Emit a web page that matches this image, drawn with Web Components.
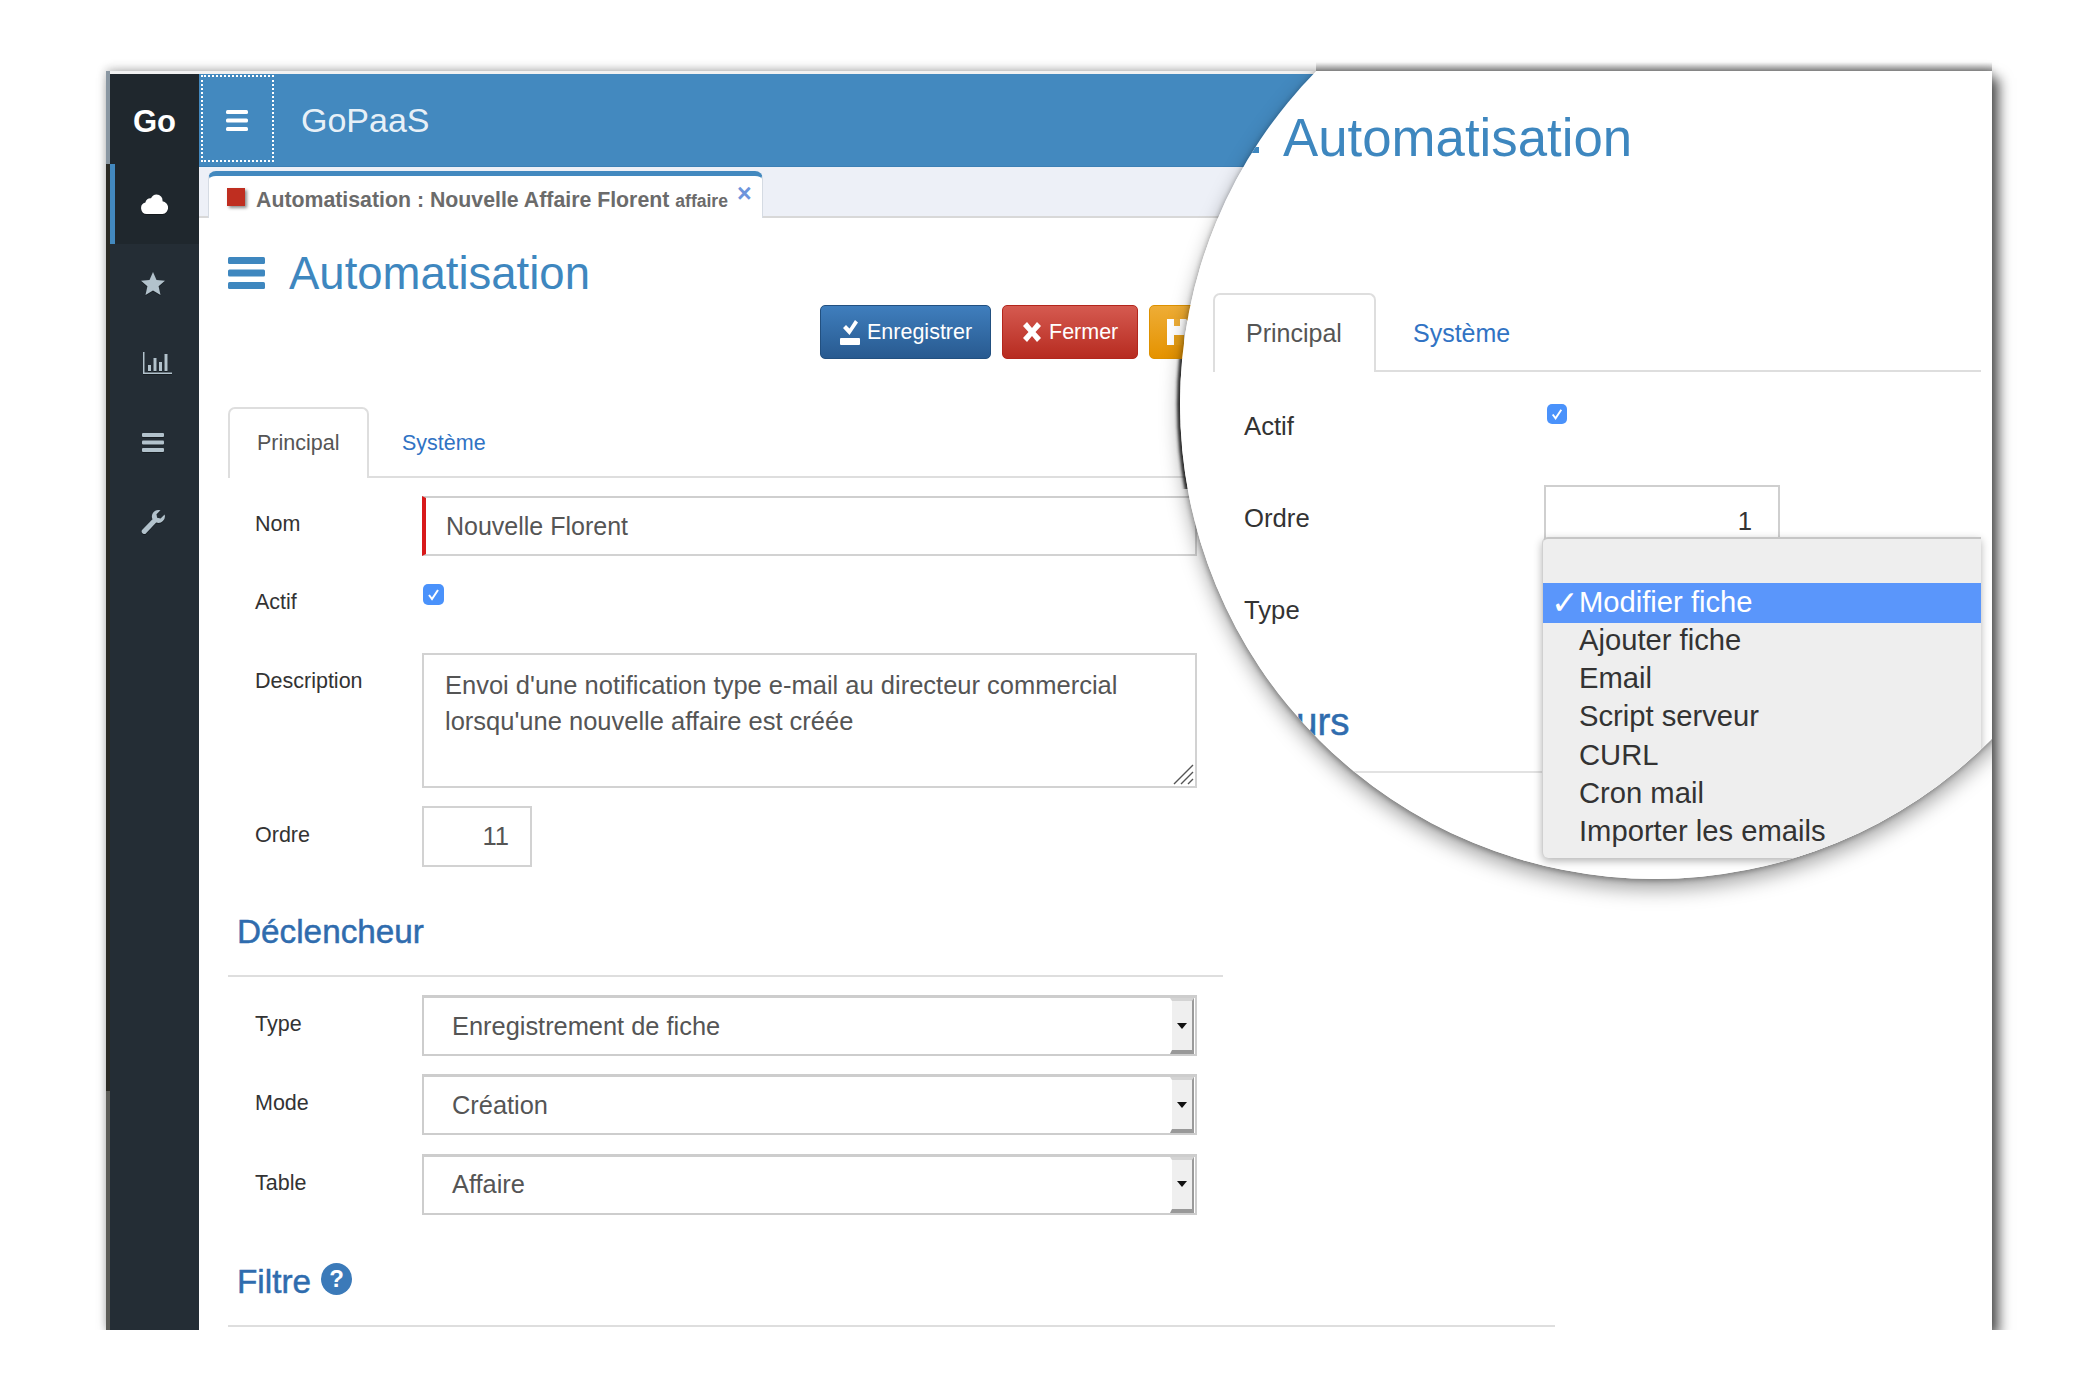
<!DOCTYPE html>
<html lang="fr">
<head>
<meta charset="utf-8">
<title>GoPaaS</title>
<style>
  html, body { margin: 0; background: #fff; }
  body { font-family: "Liberation Sans", Arial, sans-serif; font-size: 21.5px; color: #333; overflow: hidden; }
</style>
</head>
<body>
<gp-window>
  <gp-sidebar slot="side"></gp-sidebar>
  <gp-header slot="head" title-text="GoPaaS"></gp-header>
  <gp-doctab slot="head" tab-title="Automatisation : Nouvelle Affaire Florent" tab-sub="affaire"></gp-doctab>

  <gp-title text="Automatisation"></gp-title>
  <gp-toolbar></gp-toolbar>
  <gp-tabs style="margin-top:48px"></gp-tabs>

  <gp-field label="Nom" style="margin-top:18px"><gp-box required style="font-size:25px;padding-left:20px">Nouvelle Florent</gp-box></gp-field>
  <gp-field label="Actif" style="margin-top:18px;height:60px"><gp-check style="margin-top:10px;margin-left:1px"></gp-check></gp-field>
  <gp-field label="Description" style="margin-top:19px"><gp-box area>Envoi d'une notification type e-mail au directeur commercial<br>lorsqu'une nouvelle affaire est créée</gp-box></gp-field>
  <gp-field label="Ordre" style="margin-top:18px;--label-top:14px"><gp-box number style="height:61px">11</gp-box></gp-field>

  <gp-section style="margin-top:45px;width:995px">Déclencheur</gp-section>
  <gp-field label="Type" style="margin-top:18px;--label-top:14px"><gp-select>Enregistrement de fiche</gp-select></gp-field>
  <gp-field label="Mode" style="margin-top:18px;--label-top:14px"><gp-select>Création</gp-select></gp-field>
  <gp-field label="Table" style="margin-top:18.500px;--label-top:14px"><gp-select>Affaire</gp-select></gp-field>
  <gp-section help style="margin-top:47px;width:1327px">Filtre</gp-section>

  <gp-lens slot="over"></gp-lens>
</gp-window>

<script>
const bars = (w, h, t) => `<svg width="${w}" height="${h}" viewBox="0 0 ${w} ${h}" fill="currentColor" aria-hidden="true">
  <rect width="${w}" height="${t}" rx="1.5"/><rect y="${(h - t) / 2}" width="${w}" height="${t}" rx="1.5"/><rect y="${h - t}" width="${w}" height="${t}" rx="1.5"/></svg>`;

class GpWindow extends HTMLElement {
  constructor() {
    super();
    this.attachShadow({ mode: "open" }).innerHTML = `
    <style>
      :host { display: block; position: relative; box-sizing: border-box; width: 1886px; height: 1259px; margin: 71px 0 0 106px;
        background: #fff; box-shadow: 0 -2px 9px rgba(0,0,0,.22), 7px 7px 12px rgba(0,0,0,.65); }
      .frame { display: flex; height: 100%; }
      .edge { width: 4px; flex: none; background: linear-gradient(#8a97a2 0 93px, #2b2a24 93px 1020px, #5d5d58 1020px); }
      .right { flex: 1; display: flex; flex-direction: column; min-width: 0; }
      .topline { height: 3px; flex: none; background: #f1f1f1; }
      .body { flex: 1; display: flex; min-height: 0; }
      .col { flex: 1; display: flex; flex-direction: column; min-width: 0; overflow: hidden; }
      .content { padding: 27px 0 0 29px; flex: 1; overflow: hidden; }
      .lensTop { position: absolute; left: 1210px; right: 0; top: -9px; height: 9px; background: linear-gradient(rgba(0,0,0,0), rgba(0,0,0,.36)); }
    </style>
    <div class="frame">
      <div class="edge"></div>
      <div class="right">
        <div class="topline"></div>
        <div class="body">
          <slot name="side"></slot>
          <div class="col">
            <slot name="head"></slot>
            <div class="content"><slot></slot></div>
          </div>
        </div>
      </div>
    </div>
    <div class="lensTop"></div>
    <slot name="over"></slot>`;
  }
}

class GpSidebar extends HTMLElement {
  constructor() {
    super();
    this.attachShadow({ mode: "open" }).innerHTML = `
    <style>
      :host { display: block; width: 89px; flex: none; background: #242d35; color: #b2c2cc; }
      .logo { height: 90px; display: flex; align-items: center; justify-content: center; background: #1f272d; color: #fff; font-weight: 700; font-size: 31px; padding: 5px 0 0 0; box-sizing: border-box; }
      .item { height: 79.5px; display: flex; align-items: center; justify-content: center; box-sizing: border-box; padding-right: 3px; }
      .item.on { background: #1f272d; color: #fff; border-left: 5px solid #4389bf; padding-right: 5px; height: 80px; }
      svg { display: block; filter: drop-shadow(0 1px 0 rgba(0,0,0,.35)); }
    </style>
    <div class="logo">Go</div>
    <div class="item on"><svg width="27" height="20" viewBox="0 0 27 20" fill="currentColor"><path d="M6 20a5.8 5.8 0 0 1-1.6-11.4A5 5 0 0 1 10 4.2 6.6 6.6 0 0 1 15.500 0.500a6 6 0 0 1 6 6.800A6.400 6.400 0 0 1 21.500 20z"/></svg></div>
    <div class="item"><svg width="24" height="23" viewBox="0 0 24 23" fill="currentColor"><polygon points="12,0 15.500,8 24,8.700 17.600,14.300 19.500,23 12,18.400 4.500,23 6.400,14.300 0,8.700 8.500,8"/></svg></div>
    <div class="item"><svg width="29" height="22" viewBox="0 0 29 22" fill="currentColor" style="margin-left:8px"><path d="M0 0h1.500v20.500H29V22H0z"/><rect x="5" y="13" width="3" height="6"/><rect x="10.500" y="6" width="3" height="13"/><rect x="16" y="10" width="3" height="9"/><rect x="21.500" y="2" width="3" height="17"/></svg></div>
    <div class="item"><svg width="22" height="19" viewBox="0 0 22 19" fill="currentColor"><rect width="22" height="4" rx="1"/><rect y="7.500" width="22" height="4" rx="1"/><rect y="15" width="22" height="4" rx="1"/></svg></div>
    <div class="item"><svg width="24" height="24" viewBox="0 0 24 24" fill="currentColor"><path d="M17.500 0a6.500 6.500 0 0 1 2 .3L15.500 4.300l.6 3.500 3.500.6 4-4A6.500 6.500 0 0 1 15.200 12.500L5.300 23a2.500 2.500 0 0 1-4-3.200L11.500 9.300A6.500 6.500 0 0 1 17.500 0z"/></svg></div>`;
  }
}

class GpHeader extends HTMLElement {
  constructor() {
    super();
    this.attachShadow({ mode: "open" }).innerHTML = `
    <style>
      :host { display: flex; align-items: center; height: 93px; flex: none; background: #4389bf; color: #fff; box-sizing: border-box; border-bottom: 1px solid #3d80b5; }
      .toggle { width: 73px; height: 87px; margin: 0 0 3px 2px; box-sizing: border-box; border: 2px dotted #fff; display: flex; align-items: center; justify-content: center; padding: 3px 1px 0 0; }
      .name { margin-left: 27px; font-size: 34px; color: rgba(255,255,255,.9); }
    </style>
    <div class="toggle">${bars(22, 21, 4)}</div>
    <div class="name">${this.getAttribute("title-text")}</div>`;
  }
}

class GpDoctab extends HTMLElement {
  constructor() {
    super();
    this.attachShadow({ mode: "open" }).innerHTML = `
    <style>
      :host { display: block; height: 51px; flex: none; background: #edf0f7; box-sizing: border-box; border-bottom: 2px solid #d8d8d8; padding: 4px 0 0 9px; }
      .tab { position: relative; display: flex; align-items: center; box-sizing: border-box; width: 555px; height: 47px; background: #fff; border-top: 5px solid #4389bf; border-left: 1px solid #d5dbe3; border-right: 1px solid #d5dbe3; border-radius: 8px 8px 0 0; padding-left: 18px; color: #6b6b6b; font-weight: 700; font-size: 21.300px; }
      .flag { width: 18px; height: 18px; background: #bf2e20; box-shadow: 2px 2px 3px rgba(0,0,0,.45); margin-right: 11px; flex: none; margin-top: -1px; }
      .txt { padding-top: 6px; }
      .sub { font-size: 17.5px; margin-left: 6px; padding-top: 8px; }
      .close { position: absolute; left: 528px; top: 5px; color: #6d95dc; font-size: 25px; line-height: 24px; }
    </style>
    <div class="tab"><span class="flag"></span><span class="txt">${this.getAttribute("tab-title")}</span><span class="sub">${this.getAttribute("tab-sub")}</span><span class="close">×</span></div>`;
  }
}

class GpTitle extends HTMLElement {
  constructor() {
    super();
    this.attachShadow({ mode: "open" }).innerHTML = `
    <style>
      :host { display: flex; align-items: center; height: 56px; color: #3e87bf; font-size: 45.500px; }
      svg { margin-right: 24px; display: block; }
      span { padding-top: 2px; }
    </style>
    ${bars(37, 32, 7)}<span>${this.getAttribute("text")}</span>`;
  }
}

class GpButton extends HTMLElement {
  constructor() {
    super();
    this.attachShadow({ mode: "open" }).innerHTML = `
    <style>
      :host { display: flex; align-items: center; box-sizing: border-box; height: 54px; border-radius: 5px; color: #fff; gap: 7px; padding: 0 19px; border: 1px solid; }
      :host([kind=blue]) { background: linear-gradient(#3f7ebd, #285a90); border-color: #225080; width: 171px; }
      :host([kind=red]) { background: linear-gradient(#d55a50, #b72b20); border-color: #b3261c; }
      :host([kind=orange]) { background: linear-gradient(#eead36, #e59300); border-color: #dd9100; width: 150px; }
      ::slotted(svg) { display: block; flex: none; }
    </style>
    <slot></slot>`;
  }
}

class GpToolbar extends HTMLElement {
  constructor() {
    super();
    this.attachShadow({ mode: "open" }).innerHTML = `
    <style>
      :host { display: flex; gap: 11px; margin-top: 4px; padding-left: 592px; }
    </style>
    <gp-button kind="blue"><svg width="20" height="25" viewBox="0 0 20 25" fill="#fff"><path d="M3 8l3-3 3.500 3.500L15 0l3 2.500L9.500 15z"/><rect y="18" width="20" height="7" rx="1"/></svg>Enregistrer</gp-button>
    <gp-button kind="red" style="width:136px;padding:0 0 0 20px;gap:8px"><svg width="18" height="20" viewBox="0 0 18 20" fill="#fff"><path d="M0 4l4-4 5 6 5-6 4 4-5.500 6L18 16l-4 4-5-6-5 6-4-4 5.500-6z"/></svg>Fermer</gp-button>
    <gp-button kind="orange" style="padding:0 17px"><svg width="24" height="26" viewBox="0 0 24 26" fill="#fff"><path d="M0 0h19l5 5v21H0z"/><rect x="7" y="0" width="6" height="7" fill="#eead36"/><rect x="7" y="16" width="10" height="10" fill="#e59f18"/></svg></gp-button>`;
  }
}

class GpTabs extends HTMLElement {
  constructor() {
    super();
    this.attachShadow({ mode: "open" }).innerHTML = `
    <style>
      :host { display: flex; box-sizing: border-box; height: var(--tabs-h, 71px); border-bottom: 2px solid #dedede; width: var(--tabs-w, 1100px); font-size: var(--tabs-font, 21.5px); }
      .tab { display: flex; align-items: center; box-sizing: border-box; }
      .on { width: var(--tab-w, 141px); height: var(--tabs-h, 71px); padding-left: var(--tab-pad, 27px); background: #fff; color: #555; border: 2px solid #dedede; border-bottom: 0; border-radius: 7px 7px 0 0; }
      .off { margin-left: var(--tab-gap, 33px); color: #3173c4; height: var(--tabs-h, 71px); padding-top: 2px; box-sizing: border-box; }
    </style>
    <div class="tab on">Principal</div>
    <div class="tab off">Système</div>`;
  }
}

class GpField extends HTMLElement {
  constructor() {
    super();
    this.attachShadow({ mode: "open" }).innerHTML = `
    <style>
      :host { display: grid; grid-template-columns: var(--label-w, 167px) 1fr; padding-left: var(--label-x, 27px); align-items: start; box-sizing: border-box; }
      .label { padding-top: var(--label-top, 13px); line-height: 30px; color: #333; }
    </style>
    <div class="label">${this.getAttribute("label")}</div>
    <div><slot></slot></div>`;
  }
}

class GpBox extends HTMLElement {
  constructor() {
    super();
    this.attachShadow({ mode: "open" }).innerHTML = `
    <style>
      :host { display: flex; align-items: center; position: relative; box-sizing: border-box; width: 775px; height: 60px; padding-left: 22px; border: 2px solid #d2d2d2; font-size: 25.6px; color: #555; background: #fff; }
      :host([required]) { border-left: 4px solid #d8191a; padding-left: 21px; border-top-color: #cfcfcf; }
      :host([area]) { display: block; height: 135px; padding: 12px 0 0 21px; line-height: 36px; font-size: 25.5px; }
      :host([number]) { width: 110px; justify-content: flex-end; padding: 0 21px 0 0; }
      svg { position: absolute; right: 1px; bottom: 1px; display: block; }
    </style>
    <slot></slot>
    ${this.hasAttribute("area") ? `<svg width="22" height="22" viewBox="0 0 22 22" stroke="#555" stroke-width="1.400" fill="none"><path d="M2 21L21 2M9 21L21 9M16 21l5-5"/></svg>` : ""}`;
  }
}

class GpCheck extends HTMLElement {
  constructor() {
    super();
    this.attachShadow({ mode: "open" }).innerHTML = `
    <style>
      :host { display: block; width: var(--check, 21px); height: var(--check, 21px); border-radius: 5px; background: #4a92fb; }
      svg { display: block; width: 100%; height: 100%; }
    </style>
    <svg viewBox="0 0 21 21" fill="none" stroke="#fff" stroke-width="2"><path d="M6 11l3 4 6-9"/></svg>`;
  }
}

class GpSelect extends HTMLElement {
  constructor() {
    super();
    this.attachShadow({ mode: "open" }).innerHTML = `
    <style>
      :host { display: flex; align-items: center; box-sizing: border-box; width: 775px; height: 61px; padding-left: 28px; border: 2px solid #cdcdcd; border-top-width: 3px; font-size: 25.4px; color: #555; position: relative; }
      .btn { position: absolute; right: 1px; top: 0; bottom: 0; width: 24px; box-sizing: border-box; background: #efefef; border-left: 2px solid #fff; border-top: 3px solid #d4d4d4; border-bottom: 4px solid #999; border-right: 2px solid #9a9a9a; display: flex; align-items: center; justify-content: center; }
      .btn i { width: 0; height: 0; border: 5px solid transparent; border-top: 6px solid #111; border-bottom: 0; }
    </style>
    <slot></slot><div class="btn"><i></i></div>`;
  }
}

class GpSection extends HTMLElement {
  constructor() {
    super();
    this.attachShadow({ mode: "open" }).innerHTML = `
    <style>
      :host { display: flex; align-items: center; gap: 10px; box-sizing: border-box; padding-left: 9px; line-height: 40px; height: 65px; padding-bottom: 23px; border-bottom: 2px solid #dedede; font-size: 33.300px; color: #2f6cae; -webkit-text-stroke: .5px #2f6cae; }
      .help { width: 31px; height: 32px; border-radius: 50%; background: #3b7ab9; color: #fff; font-size: 24px; font-weight: 700; line-height: 32px; text-align: center; margin-top: -5px; -webkit-text-stroke: 0; }
    </style>
    <slot></slot>${this.hasAttribute("help") ? `<span class="help">?</span>` : ""}`;
  }
}

class GpDropdown extends HTMLElement {
  constructor() {
    super();
    const items = ["Modifier fiche", "Ajouter fiche", "Email", "Script serveur", "CURL", "Cron mail", "Importer les emails"];
    this.attachShadow({ mode: "open" }).innerHTML = `
    <style>
      :host { display: block; position: absolute; left: 329px; right: 0; top: 466px; height: 321px; box-sizing: border-box; padding-top: 44px; background: #eee; border-top: 2px solid #c6c6c6; border-left: 1px solid #d0d0d0; border-radius: 6px 0 0 6px; box-shadow: 0 3px 8px rgba(0,0,0,.3); font-size: 29.2px; color: #333; }
      .row { display: flex; align-items: center; height: 38.3px; padding: 0 0 2px 36px; box-sizing: border-box; position: relative; }
      .sel { background: #5a96fb; color: #fff; height: 40px; margin-bottom: -1px; }
      .tick { position: absolute; left: 8px; font-family: "DejaVu Sans", sans-serif; font-weight: 700; font-size: 33px; }
    </style>
    ${items.map((t, i) => `<div class="row ${i === 0 ? "sel" : ""}">${i === 0 ? `<span class="tick">✓</span>` : ""}${t}</div>`).join("")}`;
  }
}

class GpLens extends HTMLElement {
  constructor() {
    super();
    this.attachShadow({ mode: "open" }).innerHTML = `
    <style>
      :host { display: block; position: absolute; inset: 0; overflow: hidden; }
      .disc { position: absolute; left: 1074px; top: -142px; width: 950px; height: 950px; border-radius: 50%; background: #fff; overflow: hidden; }
      .halo, .arc { position: absolute; left: 1074px; top: -142px; width: 950px; height: 950px; border-radius: 50%; }
      .halo { box-shadow: -1px 2px 5px rgba(0,0,0,.3), 0 10px 20px rgba(0,0,0,.36); }
      .arc { box-shadow: -3px 0 3px rgba(0,0,0,.75); clip-path: polygon(-10px 430px, 60px 430px, 60px 560px, -10px 560px); }
      .page { position: absolute; left: 33px; top: 142px; width: 768px; height: 800px; }
      .head { display: flex; align-items: center; height: 62px; margin-top: 35px; padding-left: 70px; font-size: 52.800px; color: #3e87bf; }
      .frag { position: absolute; left: 26px; top: 76px; width: 20px; height: 6px; background: #3e87bf; }
      gp-tabs { margin-top: 125px; --tabs-h: 79px; --tabs-w: 768px; --tabs-font: 25px; --tab-w: 163px; --tab-pad: 31px; --tab-gap: 37px; }
      gp-field { height: 92px; font-size: 25.7px; --label-w: 300px; --label-x: 31px; --label-top: 31px; }
      .first { margin-top: 8px; }
      gp-box { width: 236px; height: 90px; margin-top: 13px; font-size: 25.7px; padding-right: 26px; padding-bottom: 18px; color: #333; border-color: #cfcfcf; }
      gp-check { margin-top: 24px; margin-left: 3px; --check: 20px; }
      .tail { margin: 41px 0 0; height: 76px; line-height: 50px; padding-left: 83px; box-sizing: border-box; border-bottom: 2px solid #e2e2e2; width: 331px; font-size: 38.5px; color: #2f6cae; -webkit-text-stroke: .5px #2f6cae; }
    </style>
    <div class="halo"></div>
    <div class="arc"></div>
    <div class="disc">
      <div class="page">
        <div class="frag"></div>
        <div class="head">Automatisation</div>
        <gp-tabs></gp-tabs>
        <gp-field class="first" label="Actif"><gp-check></gp-check></gp-field>
        <gp-field label="Ordre"><gp-box number>1</gp-box></gp-field>
        <gp-field label="Type"></gp-field>
        <div class="tail">urs</div>
        <gp-dropdown></gp-dropdown>
      </div>
    </div>`;
  }
}

customElements.define("gp-window", GpWindow);
customElements.define("gp-sidebar", GpSidebar);
customElements.define("gp-header", GpHeader);
customElements.define("gp-doctab", GpDoctab);
customElements.define("gp-title", GpTitle);
customElements.define("gp-button", GpButton);
customElements.define("gp-toolbar", GpToolbar);
customElements.define("gp-tabs", GpTabs);
customElements.define("gp-field", GpField);
customElements.define("gp-box", GpBox);
customElements.define("gp-check", GpCheck);
customElements.define("gp-select", GpSelect);
customElements.define("gp-section", GpSection);
customElements.define("gp-dropdown", GpDropdown);
customElements.define("gp-lens", GpLens);
</script>
</body>
</html>
